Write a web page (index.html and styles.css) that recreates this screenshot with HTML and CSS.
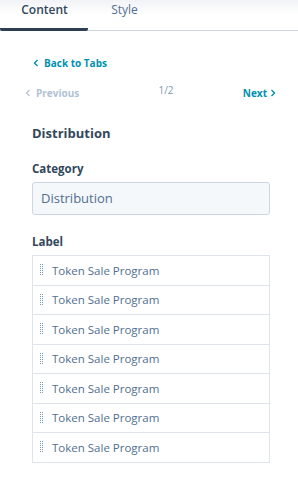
FILE: index.html
```html
<!DOCTYPE html>
<html lang="en">
<head>
  <meta charset="UTF-8">
  <title>Module Editor</title>
  <link rel="stylesheet" href="styles.css">
</head>
<body>
  <!-- Tabs -->
  <div class="tabs">
    <div class="tab active">Content</div>
    <div class="tab">Style</div>
  </div>

  <div class="panel">
    <a class="back-link" href="#">
      <svg width="6" height="8" viewBox="0 0 6 8"><path d="M4.5 1 L1.5 4 L4.5 7" fill="none" stroke="currentColor" stroke-width="1.4"/></svg>
      Back to Tabs
    </a>

    <div class="pager">
      <span class="pager-prev">
        <svg width="6" height="8" viewBox="0 0 6 8"><path d="M4.5 1 L1.5 4 L4.5 7" fill="none" stroke="currentColor" stroke-width="1.2"/></svg>
        Previous
      </span>
      <span class="pager-count">1/2</span>
      <span class="pager-next">
        Next
        <svg width="6" height="8" viewBox="0 0 6 8"><path d="M1.5 1 L4.5 4 L1.5 7" fill="none" stroke="currentColor" stroke-width="1.4"/></svg>
      </span>
    </div>

    <h2 class="section-title">Distribution</h2>

    <div class="field">
      <label class="field-label">Category</label>
      <div class="field-input">Distribution</div>
    </div>

    <div class="field">
      <label class="field-label">Label</label>
      <ul class="label-list">
        <li class="label-row"><span class="handle"></span>Token Sale Program</li>
        <li class="label-row"><span class="handle"></span>Token Sale Program</li>
        <li class="label-row"><span class="handle"></span>Token Sale Program</li>
        <li class="label-row"><span class="handle"></span>Token Sale Program</li>
        <li class="label-row"><span class="handle"></span>Token Sale Program</li>
        <li class="label-row"><span class="handle"></span>Token Sale Program</li>
        <li class="label-row"><span class="handle"></span>Token Sale Program</li>
      </ul>
    </div>
  </div>
</body>
</html>
```

FILE: styles.css
```css
* {
  margin: 0;
  padding: 0;
  box-sizing: border-box;
}

body {
  font-family: 'Open Sans', sans-serif;
  color: #33475b;
  background: linear-gradient(180deg, #f1f3f7 0px, #ffffff 14px, #ffffff 100%);
  width: 298px;
  height: 492px;
  overflow: hidden;
}

/* Tabs */
.tabs {
  display: flex;
  height: 31px;
  border-bottom: 1px solid #cbd6e2;
}

.tab {
  width: 88px;
  text-align: center;
  font-size: 12px;
  line-height: 20px;
  color: #516f90;
  padding-left: 1px;
}

.tab.active {
  font-weight: 600;
  color: #33475b;
  border-bottom: 3px solid #2d3e50;
  border-radius: 2px;
  margin-bottom: -1px;
}

.tab + .tab {
  width: 72px;
  text-align: center;
}

/* Panel */
.panel {
  padding: 25px 28px 0 32px;
}

.back-link {
  display: flex;
  align-items: center;
  gap: 5px;
  font-size: 10px;
  font-weight: 700;
  color: #0091ae;
  text-decoration: none;
  line-height: 14px;
  margin-left: 1px;
}

.pager {
  display: flex;
  justify-content: space-between;
  align-items: flex-start;
  margin: 13px -6px 0 -7px;
  font-size: 10px;
  font-weight: 700;
  line-height: 14px;
  height: 20px;
}

.pager-prev {
  display: flex;
  align-items: center;
  gap: 5px;
  color: #b0c1d4;
  margin-top: 3px;
}

.pager-count {
  font-weight: 400;
  color: #7c98b6;
  margin-left: 10px;
}

.pager-next {
  display: flex;
  align-items: center;
  gap: 3px;
  color: #0091ae;
  margin-top: 3px;
}

.section-title {
  font-size: 13px;
  font-weight: 700;
  line-height: 18px;
  margin-top: 21px;
}

.field {
  margin-top: 19px;
}

.field + .field {
  margin-top: 19px;
}

.field-label {
  display: block;
  font-size: 11.5px;
  font-weight: 700;
  line-height: 16px;
  margin-bottom: 5px;
}

.field-input {
  height: 33px;
  background: #f5f8fa;
  border: 1px solid #cbd6e2;
  border-radius: 3px;
  padding: 0 8px;
  font-size: 13px;
  line-height: 31px;
  color: #516f90;
}

/* Label list */
.label-list {
  list-style: none;
  border: 1px solid #dfe3eb;
  border-bottom: none;
}

.label-row {
  display: flex;
  align-items: center;
  height: 29.5px;
  border-bottom: 1px solid #dfe3eb;
  font-size: 11.5px;
  color: #516f90;
}

/* drag handle: two columns of small dots */
.handle {
  width: 3px;
  height: 12px;
  margin: 0 9px 0 7px;
  background-image:
    linear-gradient(180deg, transparent 1px, #ffffff 1px),
    linear-gradient(90deg, #7c98b6 1px, transparent 1px, transparent 2px, #7c98b6 2px);
  background-size: 3px 2px, 3px 12px;
  background-repeat: repeat, no-repeat;
}
```
